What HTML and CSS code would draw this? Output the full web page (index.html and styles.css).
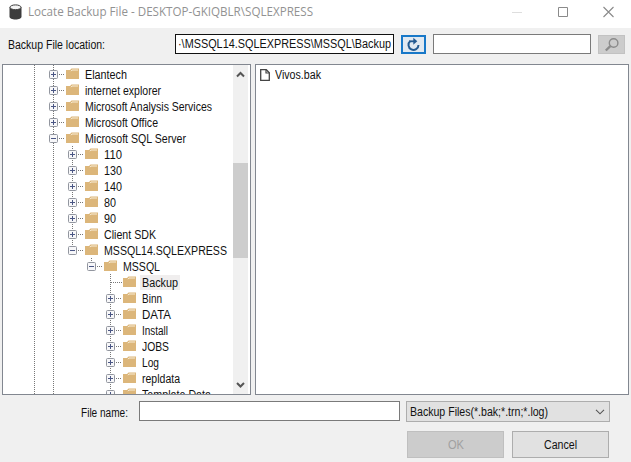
FILE: index.html
```html
<!DOCTYPE html>
<html lang="en">
<head>
<meta charset="utf-8">
<title>Locate Backup File</title>
<link rel="stylesheet" href="styles.css">
</head>
<body>
<div class="window">
  <header class="titlebar">
    <svg class="db-icon" width="13" height="16" viewBox="0 0 13 16"><path d="M.5 3.2v9.6C.5 14.4 3 15.5 6.500 15.500s6-1.100 6-2.700V3.200z" fill="#3c3c3c"/><ellipse cx="6.500" cy="3.300" rx="5.500" ry="2.400" fill="#f4f4f4" stroke="#3c3c3c"/></svg>
    <span class="title" data-w="285">Locate Backup File - DESKTOP-GKIQBLR\SQLEXPRESS</span>
    <svg class="controls" width="104" height="14" viewBox="0 0 104 14" fill="none"><path d="M1 7.500h10" stroke="#dedede"/><path d="M47.500 2.500h9v9h-9z" stroke="#8a8a8a"/><path d="M92.500 2l10 10M102.500 2l-10 10" stroke="#8a8a8a" stroke-width="1.100"/></svg>
  </header>
  <div class="toolbar">
    <span class="location"><span data-w="97">Backup File location:</span></span>
    <div class="field path"><span data-w="213">·\MSSQL14.SQLEXPRESS\MSSQL\Backup</span></div>
    <div class="refresh"><svg width="15" height="15" viewBox="0 0 15 15"><path d="M4.300 4.100A5 5 0 1 0 12.500 8" fill="none" stroke="#245a91" stroke-width="2"/><path d="M3.200 4.300h5" stroke="#245a91" stroke-width="1.800"/><path d="M7.300.7l4 3.600-4 3.500z" fill="#245a91"/></svg></div>
    <div class="field search"></div>
    <div class="find"><svg width="16" height="16" viewBox="0 0 16 16" fill="none" stroke="#8b8b8b"><circle cx="9.600" cy="6" r="4.300" stroke-width="1.400"/><path d="M6.300 9.200L1.800 13.500" stroke-width="2.400"/></svg></div>
  </div>
  <main class="panes">
    <section class="pane tree">
      <div class="rows" id="rows"></div>
      <div class="scrollbar">
        <svg width="15" height="17" viewBox="0 0 15 17"><path d="M4 11.500L7.500 8l3.500 3.500" fill="none" stroke="#555" stroke-width="2"/></svg>
        <div class="track"><div class="thumb"></div></div>
        <svg width="15" height="17" viewBox="0 0 15 17"><path d="M4 6l3.500 3.500L11 6" fill="none" stroke="#555" stroke-width="2"/></svg>
      </div>
    </section>
    <section class="pane files">
      <div class="file"><svg width="10" height="12" viewBox="0 0 10 12"><path d="M.7.700h5.600l3 3v7.600H.7z" fill="#fff" stroke="#444" stroke-width="1.300"/><path d="M6 .7v3.300h3.500" fill="none" stroke="#444" stroke-width="1.200"/></svg><span data-w="46">Vivos.bak</span></div>
    </section>
  </main>
  <div class="name-row">
    <span class="name-label"><span data-w="47">File name:</span></span>
    <div class="field name"></div>
    <div class="combo"><span data-w="138">Backup Files(*.bak;*.trn;*.log)</span><svg width="10" height="6" viewBox="0 0 10 6"><path d="M1 .8l4 4 4-4" fill="none" stroke="#555" stroke-width="1.100"/></svg></div>
  </div>
  <footer class="actions">
    <div class="button disabled"><span data-w="16">OK</span></div>
    <div class="button"><span data-w="33">Cancel</span></div>
  </footer>
</div>
<script src="tree.js"></script>
</body>
</html>
```
FILE: styles.css
```css
* { box-sizing: border-box; }
body { margin: 0; background: #f0f0f0; font: 12px/16px "Liberation Sans", Arial, sans-serif; color: #111; overflow: hidden; }
svg { display: block; flex: none; }
span { white-space: pre; }
[data-w] { display: inline-block; transform-origin: 0 50%; flex: none; }
.window { width: 631px; height: 462px; display: flex; flex-direction: column; }
.titlebar { height: 28px; flex: none; background: #fff; display: flex; align-items: center; padding: 0 16px 4px 9px; }
.title { margin-left: 6px; font: 12px/16px "Open Sans", "Noto Sans", sans-serif; color: #929292; }
.controls { margin-left: auto; }
.toolbar { height: 36px; flex: none; display: flex; align-items: flex-start; padding: 6px 0 0 8px; }
.location { width: 167px; padding-top: 3px; }
.field { height: 20px; border: 1px solid #7a7a7a; background: #fff; }
.path { width: 219px; border-color: #111; padding: 1px 0 0 2px; }
.refresh { width: 25px; height: 19px; margin: 1px 0 0 7px; border: 2px solid #1878c8; background: #e1e9f1; display: flex; align-items: center; justify-content: center; }
.search { width: 158px; margin-left: 7px; }
.find { width: 27px; height: 19px; margin: 1px 0 0 7px; border: 1px solid #c2c2c2; background: #ccc; display: flex; align-items: center; justify-content: center; }
.panes { height: 331px; flex: none; display: flex; gap: 4px; padding-left: 2px; }
.pane { border: 1px solid #828790; background: #fff; overflow: hidden; }
.tree { width: 249px; display: flex; padding-right: 2px; }
.files { width: 374px; padding: 1px 0 0 4px; }
.rows { flex: 1; min-width: 0; padding-top: 1px; overflow: hidden; background: repeating-linear-gradient(#777 0 1px, #fff 1px 2px) 31px 0 / 1px 100% no-repeat, repeating-linear-gradient(#777 0 1px, #fff 1px 2px) 50px 0 / 1px 100% no-repeat; }
.row { height: 16px; display: flex; align-items: center; }
.indent { width: 46px; flex: none; }
.level-1 .indent { width: 65px; }
.level-2 .indent { width: 84px; }
.level-3 .indent { width: 103px; }
.label { margin-left: 3px; height: 15px; padding: 0 2px; line-height: 16px; }
.label span { vertical-align: top; }
.selected .label { background: #f0eeee; }
.scrollbar { width: 15px; flex: none; background: #f0f0f0; display: flex; flex-direction: column; }
.track { flex: 1; padding-top: 81px; }
.thumb { height: 95px; background: #cdcdcd; }
.file { height: 17px; display: flex; align-items: center; gap: 5px; }
.name-row { height: 36px; flex: none; display: flex; align-items: flex-start; padding-top: 6px; }
.name-label { width: 139px; padding: 4px 0 0 81px; }
.name { width: 261px; }
.combo { width: 204px; height: 21px; margin-left: 6px; border: 1px solid #adadad; background: #e1e1e1; display: flex; align-items: center; justify-content: space-between; padding: 0 4px 0 3px; }
.actions { display: flex; gap: 8px; padding-left: 407px; }
.button { width: 97px; height: 27px; border: 1px solid #adadad; background: #e1e1e1; display: flex; align-items: center; justify-content: center; }
.disabled { background: #ccc; border-color: #bfbfbf; color: #a0a0a0; }
```
FILE: tree.js
```js
// [depth, expander, name, label width]
const nodes = [
  [0, '+', 'Elantech', 42],
  [0, '+', 'internet explorer', 76],
  [0, '+', 'Microsoft Analysis Services', 127],
  [0, '+', 'Microsoft Office', 73],
  [0, '-', 'Microsoft SQL Server', 101],
  [1, '+', '110', 18],
  [1, '+', '130', 18],
  [1, '+', '140', 18],
  [1, '+', '80', 12],
  [1, '+', '90', 12],
  [1, '+', 'Client SDK', 52],
  [1, '-', 'MSSQL14.SQLEXPRESS', 123],
  [2, '-', 'MSSQL', 37],
  [3, '', 'Backup', 36],
  [3, '+', 'Binn', 20],
  [3, '+', 'DATA', 29],
  [3, '+', 'Install', 26],
  [3, '+', 'JOBS', 27],
  [3, '+', 'Log', 17],
  [3, '+', 'repldata', 38],
  [3, '+', 'Template Data', 69]
];

function glyph(depth, sign, name) {
  const last = name === 'MSSQL14.SQLEXPRESS' || name === 'MSSQL';
  const guide = depth ? `<path d="M4.500 0v${last ? 8 : 16}" stroke="#777" stroke-dasharray="1 1"/>` : '';
  const box = sign
    ? `<rect x=".5" y="4.500" width="8" height="8" rx="1" fill="#f7f7f9" stroke="#92969f"/><path d="M2 8.500h5${sign === '+' ? 'M4.500 6v5' : ''}" stroke="#4a5684"/>`
    : '';
  return `<svg width="31" height="16" viewBox="0 0 31 16">${guide}<path d="M${sign ? 10 : 5} 8.500h${sign ? 6 : 11}" stroke="#777" stroke-dasharray="1 1"/>${box}<path d="M17 4h4l1.500-1.500H30V13H17z" fill="#dcb67a"/><path d="M22 5.200l1-1.200h6" fill="none" stroke="#f8ecd5"/></svg>`;
}

document.getElementById('rows').innerHTML = nodes.map(([depth, sign, name, width]) =>
  `<div class="row level-${depth}${name === 'Backup' ? ' selected' : ''}"><div class="indent"></div>${glyph(depth, sign, name)}<div class="label"><span data-w="${width}">${name}</span></div></div>`
).join('');

// Condense each label horizontally to its column width.
document.querySelectorAll('[data-w]').forEach(el => {
  const natural = el.getBoundingClientRect().width;
  const width = Number(el.dataset.w);
  el.style.width = natural + 'px';
  el.style.marginRight = width - natural + 'px';
  el.style.transform = `scaleX(${width / natural})`;
});
```
